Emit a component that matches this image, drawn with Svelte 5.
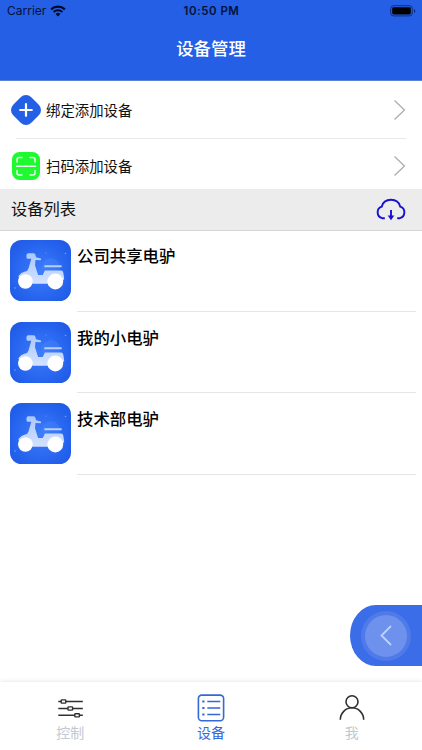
<script>
  let activeTab = $state('devices');

  const actions = [
    { id: 'bind', label: '绑定添加设备' },
    { id: 'scan', label: '扫码添加设备' },
  ];

  const devices = ['公司共享电驴', '我的小电驴', '技术部电驴'];

  const tabs = [
    { id: 'control', label: '控制' },
    { id: 'devices', label: '设备' },
    { id: 'me', label: '我' },
  ];
</script>

<div class="screen">
  <header>
    <div class="status">
      <div class="carrier">
        <span>Carrier</span>
        <svg width="16" height="12" viewBox="0 0 16 12" fill="none" stroke="currentColor" aria-hidden="true">
          <path d="M1.1 4.4a10 10 0 0 1 13.8 0" stroke-width="2.2" />
          <path d="M3.6 7a6.4 6.4 0 0 1 8.8 0" stroke-width="2" />
          <path d="M5.6 8.9a3.5 3.5 0 0 1 4.8 0L8 11.4z" fill="currentColor" stroke="none" />
        </svg>
      </div>
      <span class="time">10:50 PM</span>
      <svg class="battery" width="26" height="12" viewBox="0 0 26 12" aria-hidden="true">
        <rect x="0.7" y="0.7" width="21.6" height="10.2" rx="2.8" fill="none" stroke="#0e2f80" />
        <rect x="2.2" y="2.2" width="18.6" height="7.2" rx="1.3" fill="#000" />
        <path d="M24 4v4q1.3-.6 1.3-2T24 4z" fill="#0e2f80" />
      </svg>
    </div>
    <h1>设备管理</h1>
  </header>

  <nav class="actions">
    {#each actions as action (action.id)}
      <button type="button" class="action">
        {#if action.id === 'bind'}
          <svg width="32" height="32" viewBox="0 0 32 32" aria-hidden="true">
            <rect x="3.2" y="3.2" width="25.6" height="25.6" rx="7.5" transform="rotate(45 16 16)" fill="#2460e6" />
            <path d="M16 10.2v11.6M10.2 16h11.6" stroke="#fff" stroke-width="2.2" stroke-linecap="round" />
          </svg>
        {:else}
          <svg width="32" height="32" viewBox="0 0 32 32" fill="none" aria-hidden="true">
            <rect x="2" y="2" width="28" height="28" rx="7.5" fill="#1dfb30" />
            <path
              d="M7 12V9.500Q7 7.500 9 7.500H12M20 7.500h3q2 0 2 2V12M25 20.500V23q0 2-2 2h-3M12 25H9q-2 0-2-2v-2.500M6.500 16.300h19"
              stroke="#eaffec"
              stroke-width="1.500"
              stroke-linecap="round"
            />
          </svg>
        {/if}
        <span>{action.label}</span>
        <svg class="chevron" width="13" height="22" viewBox="0 0 13 22" fill="none" aria-hidden="true">
          <path d="M1.500 1.500l10 9.500-10 9.500" stroke="#adadad" stroke-width="1.300" />
        </svg>
      </button>
    {/each}
  </nav>

  <div class="section">
    <h2>设备列表</h2>
    <svg width="32" height="24" viewBox="0 0 32 24" fill="none" stroke="#1810d2" stroke-width="1.900" aria-hidden="true">
      <path d="M9.800 20.200H7.200A6 6 0 0 1 6.700 8.700Q8.500 1.800 16 1.800Q23.500 1.800 25.300 8.700A6 6 0 0 1 24.800 20.200H22.200" />
      <path d="M16 12v6" />
      <path d="M12.700 17.500h6.600L16 22.300z" fill="#1810d2" stroke="none" />
    </svg>
  </div>

  <ul class="devices">
    {#each devices as name, i}
      <li>
        <svg class="scooter" width="61" height="61" viewBox="0 0 61 61" aria-hidden="true">
          <defs>
            <radialGradient id="tile-{i}" cx="50%" cy="52%" r="60%">
              <stop offset="0" stop-color="#3c7dfa" />
              <stop offset="0.600" stop-color="#2b69f1" />
              <stop offset="1" stop-color="#205ce8" />
            </radialGradient>
            <linearGradient id="body-{i}" x1="0" y1="0" x2="0" y2="1">
              <stop offset="0" stop-color="#aac8fd" />
              <stop offset="1" stop-color="#d4e1ff" />
            </linearGradient>
          </defs>
          <rect width="61" height="61" rx="11.500" fill="url(#tile-{i})" />
          <circle cx="41" cy="27" r="9" fill="#4d89fb" opacity="0.350" />
          <g fill="#69a0ff">
            <circle cx="55.500" cy="13.500" r="0.800" />
            <circle cx="36" cy="13" r="0.600" />
            <circle cx="5" cy="48" r="0.800" />
            <circle cx="14" cy="46.500" r="0.600" />
          </g>
          <path
            d="M16.500 15q0-1.700 1.700-1.700h5q1.600 0 2.100 1.300l.8 2.700 4.700 1.200q.8 1-.3 1.700l-5-.2 -.5 5.200 3.100 9.700h4.600l2.200-4.400H51q2 0 2.300 2.300l.9 6-3.500 5H22.500L20 39.500 9.200 39.500 8.500 36q2.500-3.700 6.600-4.500 2.700-.4 3.400-3l2.800-9.700h-3.500q-1.300 0-1.300-1.500z"
            fill="url(#body-{i})"
          />
          <rect x="34.300" y="25.300" width="17.400" height="1.900" rx="0.500" fill="#b8cffe" />
          <circle cx="15.400" cy="41.500" r="7.300" fill="#fff" />
          <circle cx="45.300" cy="41.500" r="7.900" fill="#fff" />
        </svg>
        <div class="info">{name}</div>
      </li>
    {/each}
  </ul>

  <button type="button" class="drawer" aria-label="展开">
    <span class="knob">
      <svg width="12" height="21" viewBox="0 0 12 21" fill="none" aria-hidden="true">
        <path d="M10.500 1.500L1.500 10.500l9 9" stroke="#c1d1f8" stroke-width="1.800" stroke-linecap="round" />
      </svg>
    </span>
  </button>

  <footer>
    {#each tabs as tab (tab.id)}
      <button type="button" class="tab" class:active={activeTab === tab.id} onclick={() => (activeTab = tab.id)}>
        <svg width="28" height="28" viewBox="0 0 28 28" fill="none" stroke="currentColor" aria-hidden="true">
          {#if tab.id === 'control'}
            <path d="M2.300 7.500h3M9.700 7.500h17.100M2.300 14.500h9.700M16.300 14.500h10.500M2.300 21.300h16.500M23.200 21.300h3.600" stroke-width="1.500" />
            <rect x="5.200" y="5.900" width="4.600" height="3.200" rx="0.600" stroke-width="1.400" />
            <rect x="12" y="12.900" width="4.600" height="3.200" rx="0.600" stroke-width="1.400" />
            <rect x="18.800" y="19.700" width="4.600" height="3.200" rx="0.600" stroke-width="1.400" />
          {:else if tab.id === 'devices'}
            <rect x="1.400" y="1.100" width="25.200" height="25.600" rx="3.400" stroke-width="1.600" />
            <path d="M10.300 7.500h13M10.300 14h13M10.300 20.500h13" stroke-width="1.400" />
            <path d="M5.300 7.500h2.200M5.300 14h2.200M5.300 20.500h2.200" stroke-width="2.200" />
          {:else}
            <circle cx="14" cy="7.700" r="6" stroke-width="1.600" />
            <path d="M2.300 25.800a11.700 12 0 0 1 23.400 0" stroke-width="1.600" />
          {/if}
        </svg>
        <span>{tab.label}</span>
      </button>
    {/each}
  </footer>
</div>

<style>
  :global(body) {
    margin: 0;
    background: #fff;
  }

  .screen {
    position: relative;
    display: flex;
    flex-direction: column;
    width: 422px;
    height: 750px;
    overflow: hidden;
    background: #fff;
    color: #111;
    font-family: Inter, "Noto Sans CJK SC", sans-serif;
  }

  button {
    padding: 0;
    border: 0;
    background: none;
    color: inherit;
    font: inherit;
    text-align: left;
  }

  svg {
    display: block;
    flex: none;
  }

  /* Header */
  header {
    box-sizing: border-box;
    height: 81px;
    flex: none;
    border-bottom: 1px solid #5c7fd8;
    background: #245fe6;
  }

  .status {
    display: grid;
    grid-template-columns: 1fr auto 1fr;
    align-items: center;
    height: 22px;
    padding: 0 6px 0 7px;
    color: #04123a;
    font-size: 12px;
    line-height: 22px;
  }

  .carrier {
    display: flex;
    align-items: center;
    gap: 4px;
  }

  .carrier svg {
    color: #000a24;
  }

  .time {
    font-size: 11.500px;
    font-weight: 600;
    letter-spacing: 0.500px;
  }

  .battery {
    justify-self: end;
  }

  h1 {
    margin: 0;
    color: #fff;
    font-size: 17.400px;
    font-weight: 500;
    line-height: 54px;
    text-align: center;
  }

  /* Add actions */
  .actions {
    height: 108px;
    flex: none;
  }

  .action {
    position: relative;
    display: flex;
    align-items: center;
    box-sizing: border-box;
    width: 100%;
    height: 58px;
    padding: 0 16px 0 10px;
    font-size: 14.400px;
  }

  .action:last-child {
    height: 54px;
  }

  .action:first-child::after {
    content: "";
    position: absolute;
    right: 16px;
    bottom: 0;
    left: 16px;
    height: 1px;
    background: #e9e9e9;
  }

  .action span {
    margin-left: 4px;
    padding-bottom: 2px;
  }

  .chevron {
    margin-left: auto;
  }

  /* Device list */
  .section {
    display: flex;
    align-items: center;
    justify-content: space-between;
    box-sizing: border-box;
    height: 42px;
    flex: none;
    padding: 0 15px 0 11px;
    border-bottom: 1px solid #d4d4d4;
    background: #ececec;
  }

  h2 {
    margin: 0;
    padding-bottom: 3px;
    font-size: 16.300px;
    font-weight: 400;
  }

  .devices {
    flex: 1;
    margin: -1px 0 0;
    padding: 0;
    list-style: none;
  }

  li {
    display: flex;
    height: 81.500px;
  }

  .scooter {
    margin: 10px 6px 0 10px;
  }

  .info {
    flex: 1;
    box-sizing: border-box;
    margin-right: 6px;
    padding-top: 14px;
    border-bottom: 1px solid #e6e6e6;
    color: #000;
    font-size: 16.400px;
    font-weight: 500;
    line-height: 24px;
  }

  /* Floating drawer handle */
  .drawer {
    position: absolute;
    top: 605px;
    right: 0;
    display: flex;
    align-items: center;
    box-sizing: border-box;
    width: 72px;
    height: 61px;
    padding-left: 11px;
    border-radius: 26px 0 0 26px / 30.500px 0 0 30.500px;
    background: #3a6de7;
  }

  .knob {
    display: flex;
    align-items: center;
    justify-content: center;
    box-sizing: border-box;
    width: 50px;
    height: 50px;
    border: 4px solid #5079e9;
    border-radius: 50%;
    background: #6d91ed;
  }

  /* Tab bar */
  footer {
    display: flex;
    height: 68px;
    flex: none;
    background: #fff;
    box-shadow: 0 -1px 4px rgba(0, 0, 0, 0.090);
  }

  .tab {
    display: flex;
    flex: 1;
    flex-direction: column;
    align-items: center;
    padding-top: 12px;
    color: #303030;
    font-size: 14px;
    line-height: 22px;
  }

  .tab span {
    color: #c3c8d2;
  }

  .tab.active,
  .tab.active span {
    color: #3568d8;
  }
</style>
